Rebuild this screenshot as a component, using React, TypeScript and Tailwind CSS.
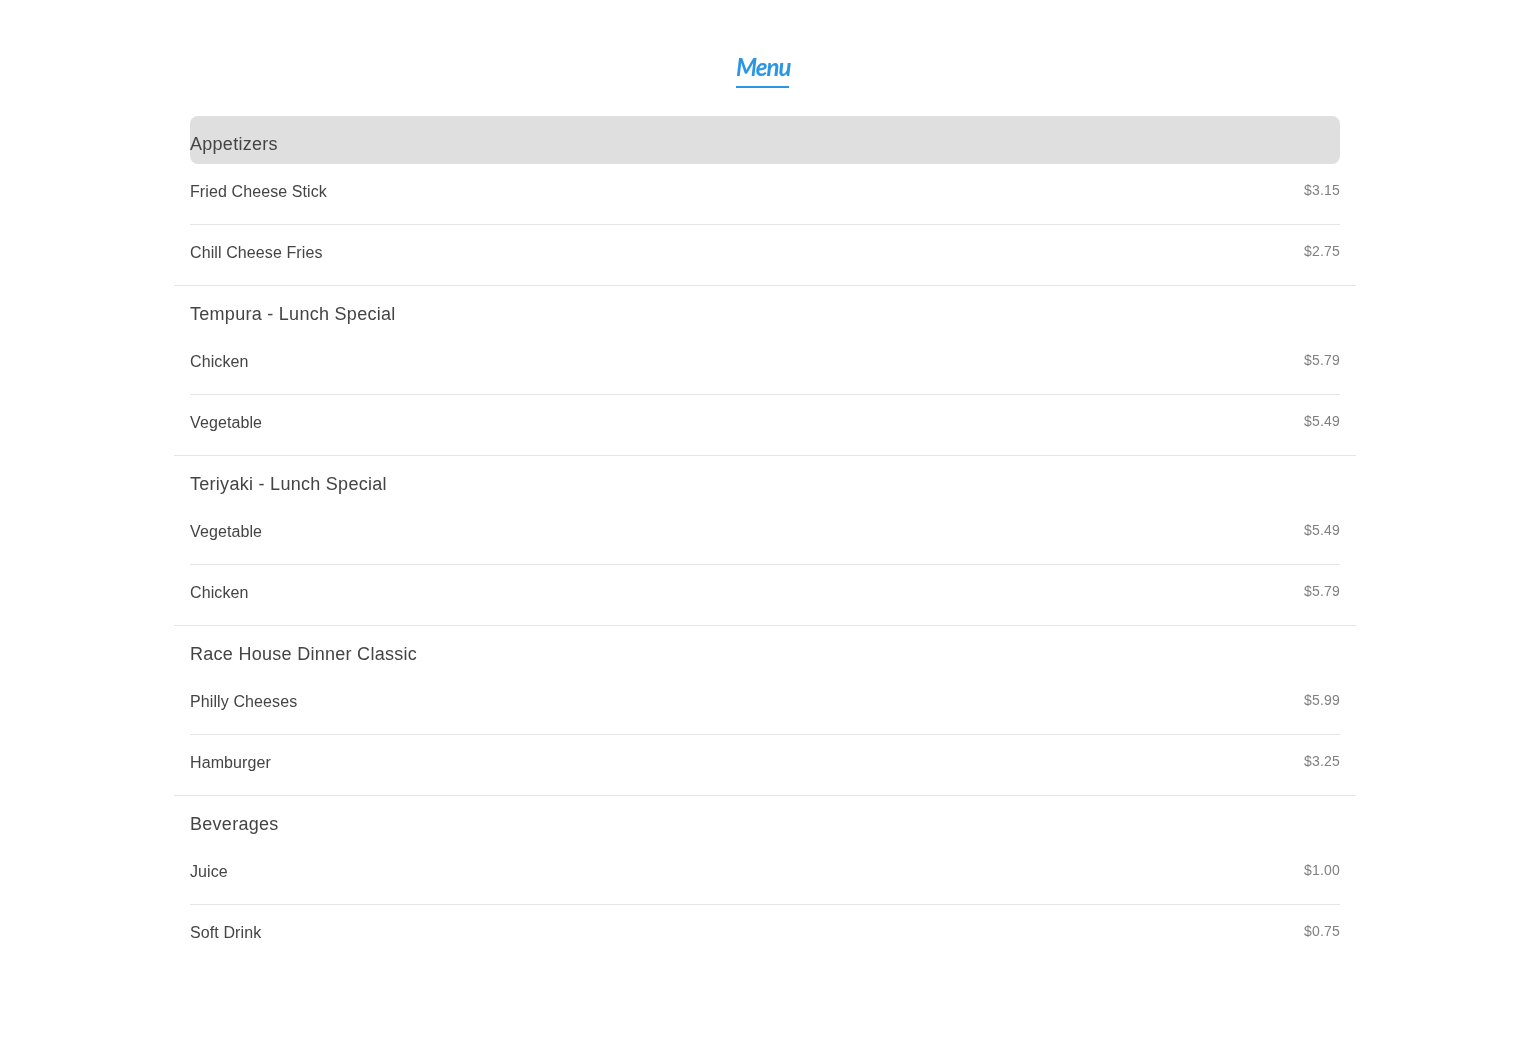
const sections = [
  { title: "Appetizers", active: true, items: [["Fried Cheese Stick", "$3.15"], ["Chill Cheese Fries", "$2.75"]] },
  { title: "Tempura - Lunch Special", items: [["Chicken", "$5.79"], ["Vegetable", "$5.49"]] },
  { title: "Teriyaki - Lunch Special", items: [["Vegetable", "$5.49"], ["Chicken", "$5.79"]] },
  { title: "Race House Dinner Classic", items: [["Philly Cheeses", "$5.99"], ["Hamburger", "$3.25"]] },
  { title: "Beverages", items: [["Juice", "$1.00"], ["Soft Drink", "$0.75"]] },
];

export default function App() {
  return (
    <div className="min-h-[1048px] bg-white font-['Liberation_Sans',Arial,sans-serif] text-[#444444]">
      <div className="mx-auto w-[1182px] pt-[50px] [will-change:opacity]">
        <div className="flex justify-center">
          <h1 className="mr-[5px] h-[38px] w-[53px] whitespace-nowrap border-b-2 border-[#2b96e5] font-['Lato',sans-serif] text-[24px] font-bold italic leading-[34px] tracking-[-1px] text-[#2b96e5]">
            Menu
          </h1>
        </div>
        <div className="mt-[28px]">
          {sections.map((s, i) => (
            <section key={s.title} className={i < sections.length - 1 ? "border-b border-[#e5e5e5] px-4" : "px-4"}>
              <h2
                className={
                  "h-12 pt-4 text-[18px] leading-6 tracking-[0.28px] " +
                  (s.active ? "rounded-lg bg-[#dfdfdf]" : "")
                }
              >
                {s.title}
              </h2>
              {s.items.map(([name, price], j) => (
                <div
                  key={name}
                  className={
                    "flex justify-between pt-[16px] " +
                    (j === 0 ? "h-[61px] border-b border-[#e5e5e5]" : "h-[60px]")
                  }
                >
                  <span className="text-[16px] leading-6 tracking-[0.1px]">{name}</span>
                  <span className="text-[14px] leading-5 tracking-[0.2px] text-[#808080]">{price}</span>
                </div>
              ))}
            </section>
          ))}
        </div>
      </div>
    </div>
  );
}
